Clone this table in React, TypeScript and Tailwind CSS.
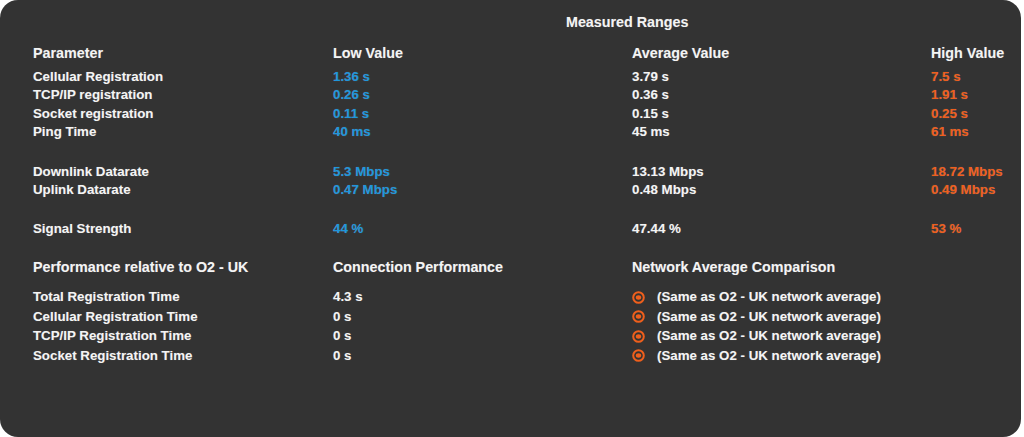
import type { ReactNode } from 'react';

const BLUE = 'text-[#1e96dc]';
const ORANGE = 'text-[#ef5f1c]';

interface RangeRow {
  label: string;
  low: string;
  avg: string;
  high: string;
}

const timingRows: RangeRow[] = [
  { label: 'Cellular Registration', low: '1.36 s', avg: '3.79 s', high: '7.5 s' },
  { label: 'TCP/IP registration', low: '0.26 s', avg: '0.36 s', high: '1.91 s' },
  { label: 'Socket registration', low: '0.11 s', avg: '0.15 s', high: '0.25 s' },
  { label: 'Ping Time', low: '40 ms', avg: '45 ms', high: '61 ms' },
];

const rateRows: RangeRow[] = [
  { label: 'Downlink Datarate', low: '5.3 Mbps', avg: '13.13 Mbps', high: '18.72 Mbps' },
  { label: 'Uplink Datarate', low: '0.47 Mbps', avg: '0.48 Mbps', high: '0.49 Mbps' },
];

const perfRows = [
  { label: 'Total Registration Time', value: '4.3 s' },
  { label: 'Cellular Registration Time', value: '0 s' },
  { label: 'TCP/IP Registration Time', value: '0 s' },
  { label: 'Socket Registration Time', value: '0 s' },
];

function Row({ children, className = '' }: { children: ReactNode; className?: string }) {
  return (
    <div className={`grid grid-cols-[300px_299px_299px_1fr] items-center whitespace-nowrap ${className}`}>
      {children}
    </div>
  );
}

function RadioDot() {
  return (
    <svg width="13" height="13" viewBox="0 0 13 13" className="shrink-0">
      <circle cx="6.5" cy="6.5" r="5.3" fill="none" stroke="#ef5f1c" strokeWidth="2" />
      <ellipse cx="6.5" cy="6.5" rx="2.7" ry="2.2" fill="#ef5f1c" />
    </svg>
  );
}

function RangeRows({ rows }: { rows: RangeRow[] }) {
  return (
    <div>
      {rows.map((r) => (
        <Row key={r.label} className="h-[18.5px]">
          <span>{r.label}</span>
          <span className={BLUE}>{r.low}</span>
          <span>{r.avg}</span>
          <span className={ORANGE}>{r.high}</span>
        </Row>
      ))}
    </div>
  );
}

export default function App() {
  return (
    <div className="w-[1024px] h-[437px] bg-white">
      <div
        className="w-[1021px] h-[437px] bg-[#333333] rounded-[18px] pl-[33px] pt-[13px] text-[13.3px] font-bold text-[#f4f4f4] [text-shadow:0_0_1px_rgba(255,255,255,0.25)]"
        style={{ fontFamily: '"Liberation Sans", Arial, sans-serif' }}
      >
        <div className="h-[18px] leading-[18px] pl-[533px] text-[14.3px]">Measured Ranges</div>

        <Row className="h-[18px] mt-[12px] text-[14.3px]">
          <span>Parameter</span>
          <span>Low Value</span>
          <span>Average Value</span>
          <span>High Value</span>
        </Row>

        <div className="mt-[5.75px]">
          <RangeRows rows={timingRows} />
        </div>

        <div className="mt-[21px]">
          <RangeRows rows={rateRows} />
        </div>

        <Row className="h-[18.5px] mt-[20px]">
          <span>Signal Strength</span>
          <span className={BLUE}>44 %</span>
          <span>47.44 %</span>
          <span className={ORANGE}>53 %</span>
        </Row>

        <Row className="h-[18px] mt-[20px] text-[14.3px]">
          <span>Performance relative to O2 - UK</span>
          <span>Connection Performance</span>
          <span className="col-span-2">Network Average Comparison</span>
        </Row>

        <div className="mt-[12px]">
          {perfRows.map((r) => (
            <Row key={r.label} className="h-[19.5px]">
              <span>{r.label}</span>
              <span>{r.value}</span>
              <span className="col-span-2 flex items-center gap-[12px]">
                <RadioDot />
                <span>(Same as O2 - UK network average)</span>
              </span>
            </Row>
          ))}
        </div>
      </div>
    </div>
  );
}
